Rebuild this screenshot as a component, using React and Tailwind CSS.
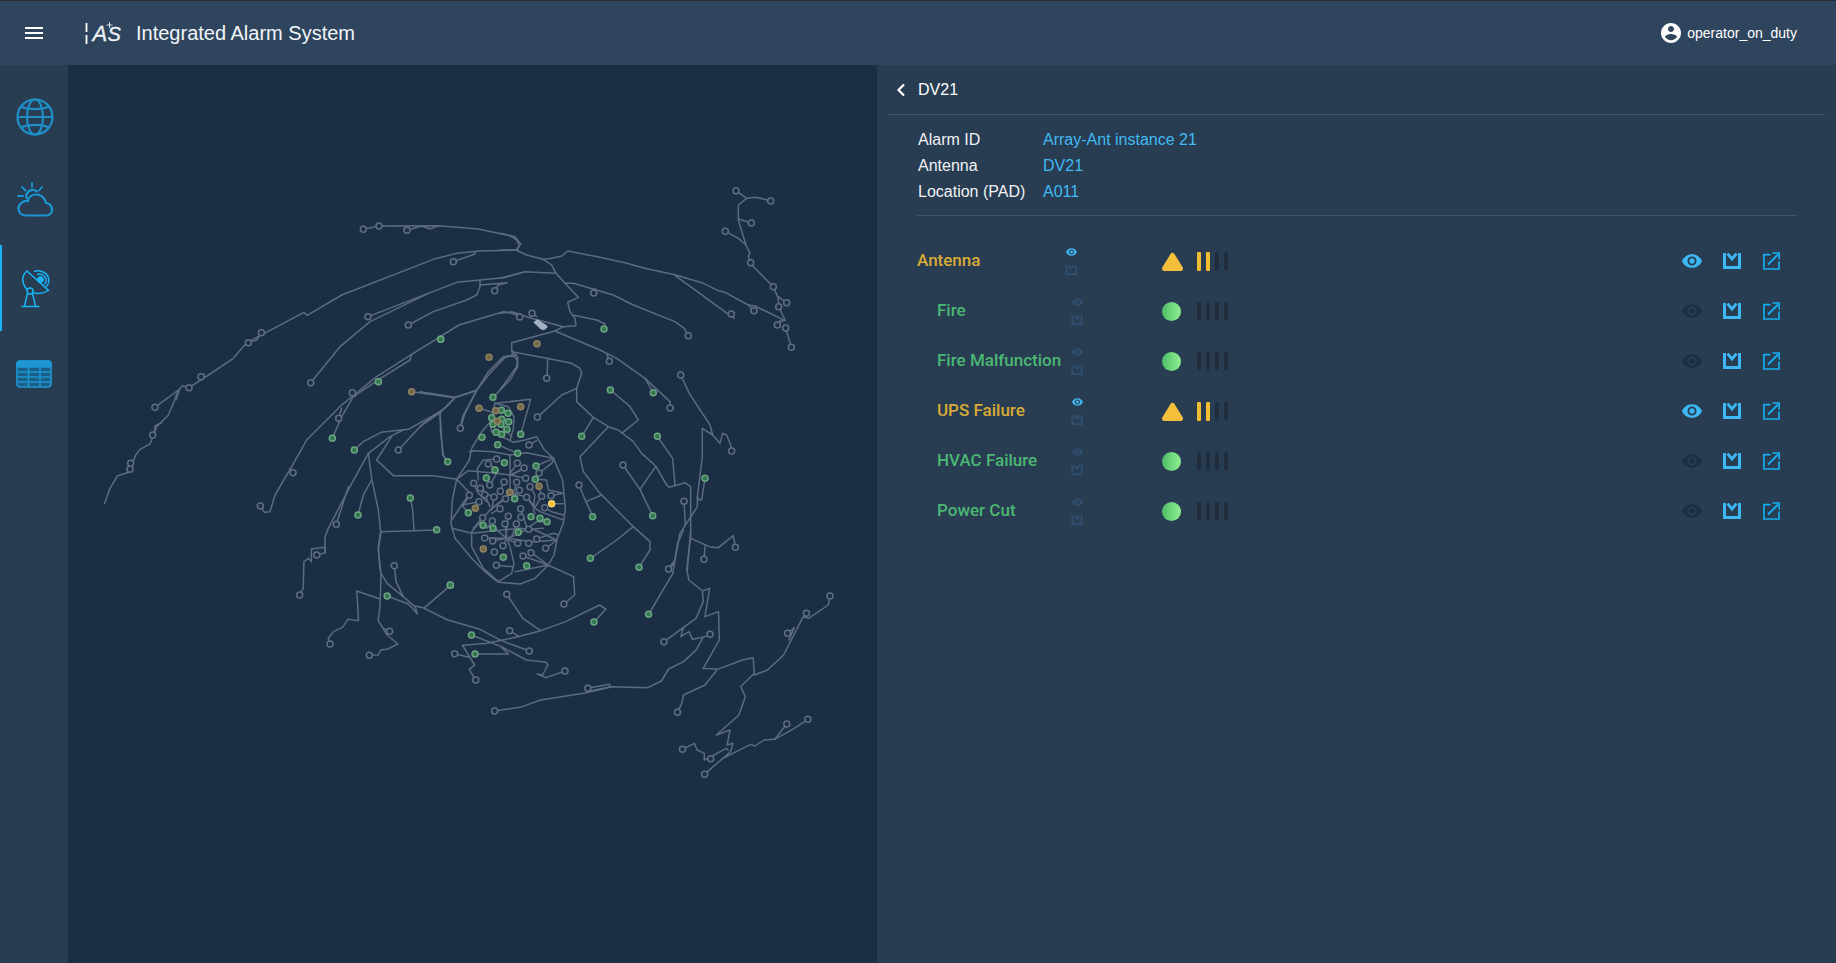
const pts = (s, ox, oy, sx = 3, sy = 3) =>
  s.trim().split(/\s+/).map((p) => {
    const [x, y] = p.split(",").map(Number);
    return [x / sx + ox, y / sy + oy];
  });

const Z5 = [100, 170, 3, 3];
const Z7 = [500, 170, 3, 3];
const Z8 = [280, 530, 2.8, 3];
const Z4 = [420, 320, 3, 3];

const lines = [
  [Z5, [
    "14,1000 30,955 52,918 88,906 107,855 120,838 150,822 158,800 170,770 205,735 218,705 235,660 165,712",
    "228,690 240,655 248,647 267,653",
    "162,795 165,768 185,757",
    "92,880 85,890 90,898",
    "267,653 330,612 400,565 440,518 612,427 622,436 725,375 1000,268 1070,250 1140,243 1255,240",
    "303,620 312,612", "445,518 470,510 484,488",
    "790,178 837,168 1015,167 1135,177 1230,197 1250,210 1258,228 1250,240",
    "921,181 965,168 990,177 1015,167",
    "1060,275 1125,252 1125,245",
    "632,638 720,530 810,455 985,370 1070,337 1210,323 1260,310",
    "804,440 985,370",
    "925,465 1000,425 1100,390 1130,375 1140,350 1140,332",
    "1184,362 1195,345 1222,338 1140,345",
    "481,1008 493,1027 510,1025 525,975 575,890 620,810 725,705 830,620 935,553 1077,465 1210,425 1260,435",
    "579,908 570,895",
    "935,553 930,570 850,620 760,680 725,740 697,805",
    "757,668 765,680", "716,745 725,715",
    "763,840 790,815 843,787 925,778 1020,725 1037,712 1050,700 1065,683 1130,660 1170,610 1215,562 1250,555",
    "935,665 1065,683",
    "1020,725 1022,790 1030,855 1043,875",
    "1081,775 1095,730 1130,660",
    "895,840 970,760 1037,712",
    "805,850 870,800 910,780",
    "805,850 750,950 685,1075 675,1100 675,1145",
    "709,1063 745,950",
    "805,850 815,925 835,1020 842,1085 835,1130 840,1200",
    "815,930 790,975 774,1035",
    "830,870 875,800", "830,870 880,917 1000,917 1072,928",
    "842,1085 1010,1080", "931,984 938,1020 942,1080",
  ]],
  [Z7, [
    "708,62 740,85", "812,93 768,82 740,85 715,105 715,150 738,225 750,250 745,258 752,278 765,295 815,345 820,350 835,385 836,410 855,450 840,455",
    "860,398 835,380", "754,159 716,147", "676,184 715,205 738,225", "832,465 840,452", "857,474 874,532",
    "0,240 48,240 80,255 130,268 155,265 185,258 203,243 300,262 375,278 440,296 525,314 610,340 655,362 675,367 745,405 765,408 855,452",
    "525,316 695,440 703,445", "745,405 762,422",
    "48,240 62,222 45,200 0,190",
    "130,268 155,285 168,310 195,340 235,382 203,397 210,425 225,445 228,467 190,470 165,483 35,518 35,540 40,545",
    "0,325 75,305 168,310",
    "195,340 220,340 340,375 400,405 525,455 553,475 565,497",
    "281,369 285,355",
    "218,435 290,450 315,462 312,477",
    "0,430 35,425 95,445 190,470", "59,441 40,430", "96,430 110,440",
    "165,483 300,540 350,565 435,625 510,695 510,714", "328,574 320,552", "460,668 435,625",
    "35,545 140,565 215,580 240,595 245,610 230,655 230,695 280,742 325,770 355,780 400,815 425,850 467,888 500,945 507,952 555,938 572,950 572,1100 560,1200",
    "143,565 141,625",
    "230,655 185,675 112,742",
    "280,742 245,800",
    "332,660 390,710 415,750 365,790",
    "325,770 240,860 250,905 300,970 400,1070 450,1115 450,1140 417,1192",
    "400,1070 350,1110 271,1165",
    "472,799 518,865 525,945",
    "467,890 420,958", "369,885 420,958 440,1000 458,1037",
    "237,945 258,995 279,1040", "258,995 305,975",
    "542,615 568,670 630,765 638,795 607,775 607,860 592,980 598,990 605,990 615,925",
    "638,795 660,820 668,790 680,795 692,825 695,843",
    "592,980 592,1010 540,1090 525,1170 508,1192",
    "552,994 556,1065",
    "572,1105 628,1130 655,1133 700,1097 706,1131", "612,1168 615,1128",
    "0,660 50,590 52,570 40,557 15,560 0,570",
    "40,545 35,555",
  ]],
  [Z8, [
    "55,195 65,175 67,95 80,85 88,95 88,57 125,52 127,68 103,75",
    "283,5 275,60 283,130 280,230 275,272 300,315 330,342 300,358 282,360 275,375 250,376",
    "307,304 290,295",
    "283,130 300,160 345,200 378,230 385,252 360,222 300,198",
    "320,107 325,155 345,200",
    "140,342 135,325 150,305 175,292 190,268 220,272 215,183 280,207",
    "477,166 405,233",
    "378,228 400,233 470,270 560,298 620,332 698,363",
    "536,315 620,350 690,390 745,397 750,405 735,435 720,432 745,443 798,423",
    "635,193 680,265 730,302",
    "511,346 580,340 660,322 730,302 800,275 895,225 912,237 880,276",
    "511,346 545,405 530,418 548,450",
    "489,371 530,382", "546,372 640,372 620,352",
    "643,302 670,320",
    "601,543 672,532 730,510 850,490 930,470 1030,473 1068,453 1088,417 1130,395 1165,360 1185,322 1204,313",
    "862,475 922,463 925,470 870,483",
    "1185,322 1155,328 1145,305 1122,320 1130,292 1088,325 1075,335",
    "1150,0 1140,125 1145,150 1183,183 1203,175 1190,260 1228,245 1230,330 1185,415 1225,418 1295,390 1325,383 1328,430 1290,470 1303,500 1285,555 1222,615 1260,600 1252,645 1268,640 1262,665 1240,685 1318,643 1330,648 1355,630 1385,628 1440,595 1478,568",
    "1240,685 1188,733",
    "1127,658 1160,640 1168,660 1188,670 1188,690 1250,655 1255,660",
    "1225,418 1190,465 1130,495 1125,520 1113,547",
    "1328,435 1365,420 1410,375 1465,260 1480,265 1535,225 1540,198",
    "1421,310 1440,293 1425,330", "1385,628 1419,582",
    "1032,253 1100,130 1113,40 1130,0", "1088,117 1105,100",
    "1183,183 1185,215 1165,265 1130,292",
    "750,105 822,140 825,195 795,222",
  ]],
  [Z4, [
    "120,325 128,290 170,212 205,155 250,110 280,107",
    "170,212 105,232 60,278 0,320", "105,232 0,215", "60,278 68,405 83,425",
    "219,232 270,180 293,140 293,112 280,98",
    "110,478 97,540 93,610 105,655 155,715 195,755 235,787 300,792 345,775 385,735 402,705 412,655 430,610 436,565 428,480 400,415 372,388 350,350 315,360 280,367",
    "148,420 155,385 185,335 215,300",
    "148,420 110,478", "148,395 160,392 220,395 270,405 320,398 400,415",
    "233,374 270,390 293,400",
    "172,445 190,420 230,417", "172,445 175,480",
    "110,478 145,452 230,460 270,465 310,447", "270,405 270,520",
    "110,478 150,520 125,555 95,600", "125,555 177,545", "125,555 145,578",
    "155,635 210,570 270,520 320,530 340,560 360,575 430,600",
    "95,625 155,640 300,625 345,630 410,660",
    "155,635 155,680 190,745 235,785 275,760 282,730 270,680 260,655",
    "260,655 300,640 350,605 381,605", "260,655 340,665 410,660", "260,655 225,625 189,616",
    "260,655 218,663", "260,655 249,677", "260,655 194,654",
    "385,735 333,698", "385,735 285,755", "309,708 385,735", "229,736 280,740",
    "161,490 175,520 200,545", "257,536 210,570", "222,531 215,570", "240,566 215,580",
    "265,589 262,610 258,650", "302,566 320,620", "289,612 275,650", "255,612 260,650",
    "188,593 160,625", "217,603 200,625", "252,486 240,515", "290,487 280,520", "298,511 280,525",
    "320,532 345,560", "365,529 340,570 345,580", "374,563 395,575 430,585", "393,527 430,520",
    "395,551 430,551", "348,438 400,415", "357,459 395,430 402,415", "346,478 380,480 385,510 430,520",
    "357,499 365,530", "330,500 345,525 340,560", "326,628 370,625", "350,657 400,640 415,645",
    "377,685 412,660", "293,670 265,660", "205,432 235,450", "292,429 270,460", "312,444 275,465",
    "317,475 270,465", "209,495 230,460", "181,505 215,530", "148,526 130,555", "194,524 210,560",
    "225,250 332,238 302,343", "225,250 210,310 215,335 245,350 270,362",
    "225,250 265,260 282,290 280,325 270,362 280,367", "177,265 227,280", "275,350 245,320 232,304",
    "327,375 350,362",
  ]],
];

const nodes = {
  hollow: [
    [Z5, "790,178 837,168 921,181 1060,275 804,440 925,465 1184,362 632,638 484,488 445,518 303,620 267,653 165,712 158,795 90,898 92,880 757,668 716,745 895,840 579,908 481,1008 709,1063"],
    [Z7, "708,62 812,93 754,159 676,184 752,278 820,350 860,398 836,410 762,422 694,432 832,465 857,474 874,532 281,369 565,497 96,430 59,441 328,574 510,714 542,615 695,843 369,885 237,945 552,994"],
    [Z8, "55,195 103,75 140,342 250,376 307,304 320,107 635,193 795,222 643,302 698,363 489,371 548,450 798,423 601,543 862,475 1075,335 1204,313 1113,547 1127,658 1206,686 1189,733 1419,582 1478,568 1421,310 1474,250 1540,198 1088,117 1187,88 1275,52"],
    [Z4, "380,175 121,325 352,291 327,375 230,417 205,432 292,429 312,444 357,459 317,475 161,490 181,505 209,495 252,486 290,487 330,500 241,514 298,511 148,526 194,524 222,531 257,536 320,532 365,529 393,527 177,545 240,566 302,566 374,563 265,589 188,593 303,592 217,603 255,612 289,612 326,628 194,654 218,663 293,670 326,670 350,657 249,677 377,685 223,696 333,698 309,708 229,736"],
  ],
  green: [
    [Z5, "1022,508 835,635 697,805 763,840 931,984 774,1035"],
    [Z7, "460,668 472,799 615,925 458,1037 417,1192"],
    [Z8, "300,198 477,166 536,315 546,372 1032,253 879,276"],
    [Z4, "62,58 552,27 219,232 186,352 302,343 233,374 293,400 253,428 225,450 199,474 348,438 346,478 284,536 145,578 333,590 360,595 381,605 189,616 219,625 295,637 250,712 320,737 83,425 50,629 91,795 485,349 571,210 518,590 511,715 244,271 264,280 215,293 245,298 266,305 219,313 243,313 261,328 228,337 245,343"],
  ],
  tan: [
    [Z5, "935,665"],
    [Z4, "351,71 207,112 177,265 227,272 302,260 232,304 357,499 269,517 166,565 190,687"],
  ],
  yellow: [[Z4, "395,551"]],
};

const nodeStyle = {
  hollow: { fill: "#1b2e45", stroke: "#5f6f82" },
  green: { fill: "#35754f", stroke: "#6aa581" },
  tan: { fill: "#74684a", stroke: "#8f8260" },
  yellow: { fill: "#f5c033", stroke: "#f8d468" },
};

function MapDrawing() {
  return (
    <svg viewBox="68 65 809 898" className="block w-full h-full">
      <g fill="none" stroke="#5c6c7f" strokeWidth="1.5" strokeLinejoin="round" strokeLinecap="round">
        {lines.flatMap(([z, arr], i) =>
          arr.map((s, j) => (
            <polyline key={`${i}-${j}`} points={pts(s, ...z).map((p) => p.join(",")).join(" ")} />
          ))
        )}
      </g>
      <polygon points={pts("100,457 112,448 140,466 143,472 132,481 122,478", ...Z7).map((p) => p.join(",")).join(" ")} fill="#a3b1c4" />
      {Object.entries(nodes).map(([kind, groups]) =>
        groups.flatMap(([z, s], i) =>
          pts(s, ...z).map(([x, y], j) => (
            <circle key={`${kind}-${i}-${j}`} cx={x} cy={y} r="3" strokeWidth="1.5" {...nodeStyle[kind]} />
          ))
        )
      )}
    </svg>
  );
}

const EYE = "M12 4.5C7 4.5 2.73 7.61 1 12c1.73 4.39 6 7.5 11 7.5s9.27-3.11 11-7.5c-1.73-4.39-6-7.5-11-7.5zM12 17c-2.76 0-5-2.24-5-5s2.24-5 5-5 5 2.24 5 5-2.24 5-5 5zm0-8c-1.66 0-3 1.34-3 3s1.34 3 3 3 3-1.34 3-3-1.34-3-3-3z";

function Eye({ className }) {
  return (
    <svg viewBox="1 4.5 22 15" className={className} fill="currentColor">
      <path d={EYE} />
    </svg>
  );
}

function Ack({ className }) {
  return (
    <svg viewBox="0 0 18 16" className={className} fill="none" stroke="currentColor">
      <path d="M1.5 0 V14.5 H16.5 V0" strokeWidth="3" />
      <path d="M4.5 0.5 L9 6 L13.5 0.5" strokeWidth="2.8" />
    </svg>
  );
}

function External({ className }) {
  return (
    <svg viewBox="0 0 17 18" className={className} fill="none" stroke="currentColor" strokeWidth="1.7">
      <path d="M7.5 2.6 H0.9 V17 H16 V9.5" />
      <path d="M5 12.5 L15 2.5" strokeWidth="2" />
      <path d="M9.5 1 H16.2 V7.6" />
    </svg>
  );
}

function Globe() {
  return (
    <svg viewBox="0 0 38 38" className="w-[38px] h-[38px]" fill="none" stroke="#1f8fc6" strokeWidth="2.2">
      <circle cx="19" cy="19" r="17.5" />
      <ellipse cx="19" cy="19" rx="8" ry="17.5" />
      <path d="M1.5 19 H36.5 M5 8.5 C12 12 26 12 33 8.5 M5 29.5 C12 26 26 26 33 29.5" />
    </svg>
  );
}

function Weather() {
  return (
    <svg viewBox="0 0 36 36" className="w-[36px] h-[36px]" fill="none" stroke="#1c97d2" strokeWidth="2.2" strokeLinecap="round">
      <path d="M15 1 V5 M5 5 L8.5 8.5 M25 5 L22 8.5 M1 14 H6" strokeWidth="1.8" />
      <path d="M9.5 16 A6.5 6.5 0 0 1 20 9.5" />
      <path d="M9 33.5 H29 C33 33.5 35 30.5 35 27.5 C35 24 32.5 21 29 21 C27.5 15.5 23.5 12.5 19 12.5 C14.5 12.5 11.5 15.5 11 19 C6 18.5 1.5 22 1.5 26.5 C1.5 30.5 4.5 33.5 9 33.5 Z" />
    </svg>
  );
}

function Dish() {
  return (
    <svg viewBox="0 0 30 38" className="w-[30px] h-[38px]" fill="none" stroke="#1ab4f5" strokeWidth="1.5">
      <path d="M6 1 L27.5 20.5 C20 25.5 9 24 4 17 C0.5 11 1.5 5 6 1 Z" />
      <path d="M13 1.5 C18 -0.5 26 2 27.5 8 C28.5 12 27 15 25 17" />
      <path d="M16 4.5 C19 3 24 5 25 9 C25.5 11.5 24.5 13.5 23 14.5" />
      <circle cx="19.5" cy="9.5" r="2.6" fill="#1ab4f5" />
      <circle cx="9" cy="21" r="3" fill="#283c52" />
      <path d="M6.5 23.5 L3.5 36 M11.5 23.5 L14.5 36 M0.5 36.5 H18.5" />
    </svg>
  );
}

function TableIcon() {
  return (
    <svg viewBox="0 0 36 28" className="w-[36px] h-[28px]" fill="none" stroke="#1c97d2" strokeWidth="1.6">
      <rect x="1" y="1" width="34" height="26" rx="3" fill="#1b5f88" />
      <path d="M1 7 V3.5 A2.5 2.5 0 0 1 3.5 1 H32.5 A2.5 2.5 0 0 1 35 3.5 V7 Z" fill="#1c97d2" />
      <path d="M1 12 H35 M1 17 H35 M1 22 H35 M12.5 1 V27 M24 1 V27" />
    </svg>
  );
}

function Logo() {
  return (
    <svg viewBox="0 0 36 24" className="w-[36px] h-[24px]">
      <path d="M1.5 2 V11 M1.5 14 V23" stroke="#fff" strokeWidth="1.8" />
      <path d="M24.5 1 V7 M21.5 4 H27.5" stroke="#fff" strokeWidth="0.8" />
      <text x="7.5" y="19.5" fill="#eef2f6" stroke="#eef2f6" strokeWidth="0.3" fontSize="22" fontStyle="italic" fontFamily="'Liberation Sans', sans-serif">A</text>
      <text x="22.5" y="19.5" fill="#eef2f6" stroke="#eef2f6" strokeWidth="0.3" fontSize="20" fontStyle="italic" fontFamily="'Liberation Sans', sans-serif">S</text>
    </svg>
  );
}

function SideItem({ children, className }) {
  return (
    <div className={`flex items-center justify-center ${className}`}>
      {children}
    </div>
  );
}

function Bars({ on }) {
  return (
    <div className="flex gap-[5px] ml-[14px]">
      {[0, 1, 2, 3].map((i) => (
        <div
          key={i}
          className={i < on ? "w-[4px] h-[19px] rounded-[1px] bg-[#f3bd33]" : "w-[4px] h-[19px] rounded-[2px] bg-[#1f2d3f]"}
        />
      ))}
    </div>
  );
}

function Row({ name, warn, child }) {
  const color = warn ? "text-[#d9ab36]" : "text-[#4bb872]";
  return (
    <div className="flex items-center h-[50px] pl-[40px] pr-[56px]">
      <div className={`flex items-center w-[245px] ${child ? "pl-[20px]" : ""}`}>
        <span className={`font-medium text-[17px] ${color} ${child ? "w-[134px]" : "w-[148px]"} font-['Roboto',sans-serif]`}>
          {name}
        </span>
        <div className="flex flex-col items-center gap-[9px] w-[12px]">
          <Eye className={`w-[11px] h-[8px] ${warn ? "text-[#3fb4ec]" : "text-[#31506f]"}`} />
          <Ack className="w-[12px] h-[10px] text-[#31506f]" />
        </div>
      </div>
      {warn ? (
        <svg viewBox="0 0 21 19" className="w-[21px] h-[19px]">
          <path d="M10.5 3.5 L18.5 16.5 H2.5 Z" fill="#f4c03c" stroke="#f4c03c" strokeWidth="5" strokeLinejoin="round" />
        </svg>
      ) : (
        <div className="w-[19px] h-[19px] mr-[2px] rounded-full bg-gradient-to-r from-[#4cbc69] to-[#8ff091]" />
      )}
      <Bars on={warn ? 2 : 0} />
      <div className="ml-auto flex items-center gap-[22px]">
        <Eye className={`w-[20px] h-[14px] mr-[-1px] ${warn ? "text-[#3db8f5]" : "text-[#1d2e43]"}`} />
        <Ack className="w-[18px] h-[16px] text-[#3db8f5]" />
        <External className="w-[17px] h-[18px] text-[#16adf0]" />
      </div>
    </div>
  );
}

const rows = [
  { name: "Antenna", warn: true, child: false },
  { name: "Fire", warn: false, child: true },
  { name: "Fire Malfunction", warn: false, child: true },
  { name: "UPS Failure", warn: true, child: true },
  { name: "HVAC Failure", warn: false, child: true },
  { name: "Power Cut", warn: false, child: true },
];

export default function App() {
  return (
    <div className="w-[1836px] h-[963px] flex flex-col overflow-hidden bg-[#283c52] text-white font-['Liberation_Sans',sans-serif]">
      <header className="h-[65px] shrink-0 flex items-center bg-[#2f455e] border-t border-[#2a2d33] pl-[25px] pr-[39px]">
        <div className="flex flex-col gap-[3px] w-[18px]">
          <div className="h-[2px] bg-white" />
          <div className="h-[2px] bg-white" />
          <div className="h-[2px] bg-white" />
        </div>
        <div className="ml-[42px]"><Logo /></div>
        <div className="ml-[15px] text-xl leading-none text-[#f2f5f8]">Integrated Alarm System</div>
        <div className="ml-auto flex items-center gap-[4px] text-sm">
          <svg viewBox="0 0 24 24" className="w-[24px] h-[24px]" fill="#fff">
            <path d="M12 2C6.48 2 2 6.48 2 12s4.48 10 10 10 10-4.48 10-10S17.52 2 12 2zm0 3c1.66 0 3 1.34 3 3s-1.34 3-3 3-3-1.34-3-3 1.34-3 3-3zm0 14.2c-2.5 0-4.71-1.28-6-3.22.03-1.99 4-3.08 6-3.08 1.99 0 5.97 1.09 6 3.08-1.29 1.94-3.5 3.22-6 3.22z" />
          </svg>
          <span>operator_on_duty</span>
        </div>
      </header>
      <div className="flex flex-1 min-h-0">
        <aside className="w-[68px] shrink-0 bg-[#283c52] pt-[14px] flex flex-col relative">
          <div className="absolute left-0 top-[180px] h-[86px] w-[2px] bg-[#1ab4f5]" />
          <div className="pl-[2px] flex flex-col">
            <SideItem className="h-[76px]"><Globe /></SideItem>
            <SideItem className="h-[90px]"><Weather /></SideItem>
            <SideItem className="h-[88px] pl-[1px]"><Dish /></SideItem>
            <SideItem className="h-[82px] pr-[2px]"><TableIcon /></SideItem>
          </div>
        </aside>
        <main className="w-[809px] shrink-0 bg-[#1b2e45]">
          <MapDrawing />
        </main>
        <section className="flex-1 bg-[#283c52]">
          <div className="h-[49px] ml-[12px] mr-[11px] box-content border-b border-[#42556d] flex items-center pl-[7px]">
            <svg viewBox="0 0 10 14" className="w-[10px] h-[14px]" fill="none" stroke="#fff" strokeWidth="2.2">
              <path d="M8 1.5 L2.5 7 L8 12.5" />
            </svg>
            <span className="ml-[12px] text-base">DV21</span>
          </div>
          <div className="ml-[40px] mr-[39px] pl-[1px] pt-[12px] h-[101px] box-border border-b border-[#42556d] grid grid-cols-[125px_1fr] auto-rows-[26px] items-center text-base">
            <div className="text-[#f0f3f6]">Alarm ID</div><div className="text-[#41baf2]">Array-Ant instance 21</div>
            <div className="text-[#f0f3f6]">Antenna</div><div className="text-[#41baf2]">DV21</div>
            <div className="text-[#f0f3f6]">Location (PAD)</div><div className="text-[#41baf2]">A011</div>
          </div>
          <div className="pt-[20px]">
            {rows.map((r) => <Row key={r.name} {...r} />)}
          </div>
        </section>
      </div>
    </div>
  );
}
